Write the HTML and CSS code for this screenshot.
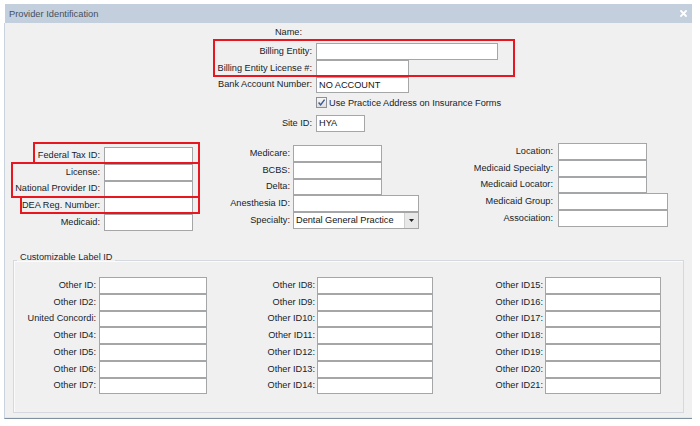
FILE: index.html
```html
<!DOCTYPE html>
<html>
<head>
<meta charset="utf-8">
<title>Provider Identification</title>
<link rel="stylesheet" href="styles.css">
</head>
<body>
<div class="window">
  <div class="titlebar">
    <span class="title">Provider Identification</span>
    <svg class="close" width="7" height="7" viewBox="0 0 7 7"><path d="M1 1L6 6M6 1L1 6" stroke="#fff" stroke-width="1.8" stroke-linecap="square"/></svg>
  </div>
  <div class="content">
    <div class="top">
      <span class="lbl name">Name:</span><span></span>
      <span class="lbl">Billing Entity:</span><span class="inp w182"></span>
      <span class="lbl">Billing Entity License #:</span><span class="inp w93"></span>
      <span class="lbl">Bank Account Number:</span><span class="inp w93">NO ACCOUNT</span>
      <span></span>
      <span class="check-row"><span class="cb"><svg width="9" height="9" viewBox="0 0 9 9"><path d="M1.6 4.6L3.6 6.9L7.6 1.6" stroke="#3a5a94" stroke-width="1.5" fill="none"/></svg></span>Use Practice Address on Insurance Forms</span>
      <span class="lbl">Site ID:</span><span class="inp w49">HYA</span>
    </div>

    <div class="mid">
      <div class="col c1">
        <span class="lbl">Federal Tax ID:</span><span class="inp"></span>
        <span class="lbl">License:</span><span class="inp"></span>
        <span class="lbl">National Provider ID:</span><span class="inp"></span>
        <span class="lbl">DEA Reg. Number:</span><span class="inp"></span>
        <span class="lbl">Medicaid:</span><span class="inp"></span>
      </div>
      <div class="col c2">
        <span class="lbl">Medicare:</span><span class="inp w89"></span>
        <span class="lbl">BCBS:</span><span class="inp w89"></span>
        <span class="lbl">Delta:</span><span class="inp w89"></span>
        <span class="lbl">Anesthesia ID:</span><span class="inp"></span>
        <span class="lbl">Specialty:</span><span class="inp select"><span class="val">Dental General Practice</span><span class="btn"><svg width="5" height="3" viewBox="0 0 5 3"><path d="M0 0H5L2.5 3Z" fill="#222"/></svg></span></span>
      </div>
      <div class="col c3">
        <span class="lbl">Location:</span><span class="inp w89"></span>
        <span class="lbl">Medicaid Specialty:</span><span class="inp w89"></span>
        <span class="lbl">Medicaid Locator:</span><span class="inp w89"></span>
        <span class="lbl">Medicaid Group:</span><span class="inp"></span>
        <span class="lbl">Association:</span><span class="inp"></span>
      </div>
    </div>

    <fieldset class="custom">
      <legend>Customizable Label ID</legend>
      <div class="ids">
        <div class="col ida">
          <span class="lbl">Other ID:</span><span class="inp"></span>
          <span class="lbl">Other ID2:</span><span class="inp"></span>
          <span class="lbl">United Concordi:</span><span class="inp"></span>
          <span class="lbl">Other ID4:</span><span class="inp"></span>
          <span class="lbl">Other ID5:</span><span class="inp"></span>
          <span class="lbl">Other ID6:</span><span class="inp"></span>
          <span class="lbl">Other ID7:</span><span class="inp"></span>
        </div>
        <div class="col idb">
          <span class="lbl">Other ID8:</span><span class="inp"></span>
          <span class="lbl">Other ID9:</span><span class="inp"></span>
          <span class="lbl">Other ID10:</span><span class="inp"></span>
          <span class="lbl">Other ID11:</span><span class="inp"></span>
          <span class="lbl">Other ID12:</span><span class="inp"></span>
          <span class="lbl">Other ID13:</span><span class="inp"></span>
          <span class="lbl">Other ID14:</span><span class="inp"></span>
        </div>
        <div class="col idc">
          <span class="lbl">Other ID15:</span><span class="inp"></span>
          <span class="lbl">Other ID16:</span><span class="inp"></span>
          <span class="lbl">Other ID17:</span><span class="inp"></span>
          <span class="lbl">Other ID18:</span><span class="inp"></span>
          <span class="lbl">Other ID19:</span><span class="inp"></span>
          <span class="lbl">Other ID20:</span><span class="inp"></span>
          <span class="lbl">Other ID21:</span><span class="inp"></span>
        </div>
      </div>
    </fieldset>
  </div>

  <div class="mark m1"></div>
  <div class="mark m2"></div>
  <div class="mark m3"></div>
  <div class="mark m4"></div>
</div>
</body>
</html>
```
FILE: styles.css
```css
* { box-sizing: border-box; }
html, body { margin: 0; padding: 0; background: #ffffff; }
body {
  font-family: "Liberation Sans", Arial, sans-serif;
  font-size: 9.2px;
  color: #161d2a;
}

.window {
  position: relative;
  width: 688px;
  margin: 4px 0 0 4px;
}

.titlebar {
  height: 19px;
  margin-left: 1px;
  background: #c3cfdc;
  display: flex;
  align-items: center;
  justify-content: space-between;
  padding: 0 5px 0 4px;
  color: #43505f;
  font-size: 9.3px;
}
.close { display: block; }

.content {
  height: 396px;
  background: #f0f0f0;
  border-left: 1px solid #c8d3de;
  border-bottom: 1px solid #7f90a3;
  box-shadow: inset 0 -1px 0 #e2e7ed;
}

.lbl {
  text-align: right;
  white-space: nowrap;
  align-self: center;
  line-height: 11px;
}

.inp {
  display: flex;
  align-items: center;
  height: 100%;
  background: #ffffff;
  border: 1px solid #a4a6a8;
  padding-left: 2px;
  white-space: nowrap;
  color: #141414;
  justify-self: stretch;
}

.w182 { width: 182px; justify-self: start; }
.w93 { width: 93px; justify-self: start; }
.w89 { width: 89px; justify-self: start; }
.w49 { width: 49px; justify-self: start; }

/* top section */
.top {
  display: grid;
  grid-template-columns: 307px 200px;
  column-gap: 4px;
  grid-template-rows: 17px 16.75px 16.75px 16.75px 21.5px 16.75px;
  padding-top: 3px;
}
.name {
  align-self: start;
  line-height: 12px;
  padding-right: 10px;
}
.check-row {
  display: flex;
  align-items: center;
  align-self: start;
  margin-top: 4px;
  white-space: nowrap;
  gap: 2px;
  height: 11px;
}
.cb {
  width: 11px;
  height: 11px;
  border: 1px solid #8e9093;
  background: linear-gradient(#f7f7f7, #dedede);
  display: flex;
  align-items: center;
  justify-content: center;
}
.cb svg { display: block; }

/* middle section */
.mid {
  display: flex;
  align-items: flex-start;
  margin-top: 11.5px;
}
.col {
  display: grid;
  grid-auto-rows: 16.75px;
}
.c1 { grid-template-columns: 95px 89px; column-gap: 4px; margin-top: 4px; }
.c2 { grid-template-columns: 97px 126px; column-gap: 3px; margin-top: 2px; }
.c3 { grid-template-columns: 134px 110px; column-gap: 5px; }

.select { padding-left: 2px; padding-right: 0; justify-content: space-between; }
.select .val { flex: 1; }
.select .btn {
  width: 14px;
  height: 100%;
  background: #e8e8e8;
  border-left: 1px solid #cfcfcf;
  display: flex;
  align-items: center;
  justify-content: center;
}
.select .btn svg { display: block; }

/* customizable group */
.custom {
  margin: 20.75px 0 0 8px;
  width: 671px;
  padding: 0 0 17.75px 0;
  border: 1px solid #d3d9df;
  box-shadow: inset 1px 1px 0 #fbfbfb;
  min-width: 0;
}
.custom legend {
  margin-left: 3px;
  padding: 0 3px 6px 3px;
  line-height: 11px;
  color: #1f2736;
}
.ids {
  display: flex;
  align-items: flex-start;
  margin-top: 8.5px;
}
.ida { grid-template-columns: 82px 108px; column-gap: 3px; }
.idb { grid-template-columns: 108px 116px; column-gap: 2px; }
.idc { grid-template-columns: 110px 116px; column-gap: 2px; }

/* red annotation boxes */
.mark {
  position: absolute;
  border: 2px solid #e8171f;
}
.m1 { left: 209px; top: 35px; width: 302px; height: 38px; }
.m2 { left: 29px; top: 138px; width: 167px; height: 22px; }
.m3 { left: 7px; top: 158px; width: 189px; height: 36px; }
.m4 { left: 16px; top: 192px; width: 180px; height: 18px; }
```
